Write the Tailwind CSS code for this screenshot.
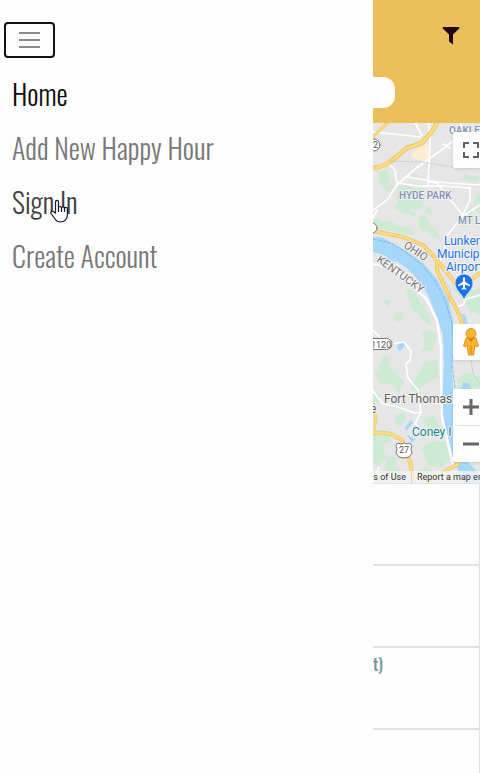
<!DOCTYPE html>
<html lang="en">
<head>
<meta charset="utf-8">
<meta name="viewport" content="width=device-width, initial-scale=1">
<title>Happy Hour</title>
<script src="https://cdn.jsdelivr.net/npm/@tailwindcss/browser@4"></script>
</head>
<body class="bg-[#fdfdfd]">
<div class="relative flex min-h-screen flex-col overflow-hidden font-['Oswald','Roboto_Condensed','Liberation_Sans_Narrow',sans-serif]">
  <header class="bg-[#ebc05b] pb-[15px]">
    <div class="flex h-[77px] justify-end pt-[27px] pr-5">
      <button aria-label="Filter" class="h-[18px] w-[18px]">
        <svg viewBox="0 0 18 18" class="block" fill="#200812"><path d="M.8 0h16.5v1.4L11 7.6v10L7 14.6v-7L.8 1.4z"/></svg>
      </button>
    </div>
    <div class="pr-[85px] pl-5"><input aria-label="Search" class="block h-[31px] w-full rounded-xl bg-[#fdfdfd] px-3 outline-none"></div>
  </header>

  <section aria-label="Map" class="flex h-[360px] justify-end bg-[#e6e6e6]">
    <div class="relative h-full w-2/9 overflow-hidden">
      <svg viewBox="0 0 107 360" preserveAspectRatio="xMinYMin slice" class="h-full w-full" font-family="Roboto, sans-serif" fill="none" stroke-linejoin="round" stroke-linecap="round">
        <rect width="107" height="361" fill="#e6e6e6"/>
        <g fill="#cdead2">
          <path d="M6 49l6-2 5 5v7l4 5-7 5-5-6-4-5zM24 65l10-3 8 4 7-1 4 5-6 7 4 5-4 5-8-1-4 6-7-3-6-3 3-9zM90 50l8 3h8v5l-8 1-8-4zM38 50l7 2-4 4zM102 74l5-3v20l-7-6zM52 83l6 1 1 8-7-2zM0 95l10 4 7-2 8 6 11 1 7 8-13-1L0 104zM45 92l8 1 3 8 9 8 3 9-12-8-10-5zM91 90l8-7 2 13-10 9-6-7zM34 87l9 2-2 6zM15 142l8 2-4 3zM33 165l9 4 5 9-6 6-7-10zM85 154l9 4 5 10 8-4v28l-9-4-10-12-8-10z"/>
          <path d="M10 177l8 1-4 6zM22 191l6-2 3 4-4 6-6-2zM38 179l10 1 7 10 4 12-6-2-6-8-9-6zM49 210l9-3 6 6-4 14-12 2 4-8zM9 231l9 4-2 9 8 9 7 5-5 13-7-10-10 1-7-11 6-10zM52 238l12-1 2 17-13 6-9 9-7-3 7-12zM0 269l8 3-3 8-5-3zM84 257l8-8 15 5v20H86zM0 307l9 5 6-2 3 8-8 3 3 14-8 9-5-7zM21 292l10-3 2 8-8 8zM51 297l9-5 8 14-12 3zM48 325l10-7 14 1 5 17-10 9-12-3zM14 332l11 3-3 9 6 3-4 9-12-6zM46 347l10-3 8 7-7 10H46zM0 350l12 4v7H0z"/>
        </g>
        <path fill="#fbeed2" d="M39 31l6-6 10-4 2 15-4 3-14-4z"/>
        <path fill="#a5d7fb" d="M0 114Q9 113 17 119L34 128 50 140 64 156 75 177 80 197 82 220 79 240 80 267 84 300 94 338 107 352V361H92L80 337 70 294 69 277 71 244 70 212 62 190 55 172 47 159 34 145 17 134 0 129z"/>
        <path stroke="#7fb0d6" stroke-width=".8" stroke-dasharray="3 2" d="M0 116L18 120 34 130 49 142 62 158 72 177 79 200 81 225 79 240 82 265"/>
        <g fill="#a5d7fb"><path d="M25 220l5-1 2 4-5 5-3-3zM88 190l4 2 4 12-4-1zM87 269l3-10 7 2 1 9zM31 306l7-9 2 3-6 7zM34 312l8 4-3 4zM8 129l8 3 8 8-7-3z"/></g>
        <g stroke="#fff" stroke-width="1.700">
          <path d="M0 9l30 3 17 2 2-2-7-12M56 0l1 20-2 42M24 62l18-16 25-18 12-9M24 62l-2-15-8-8M24 60l22 3 24 0 27 2M34 54l30 5 42 3M55 59l9 1 11 14 14 17M97 64v13l-8 17M0 87l14-10 10-15M70 21l7 4M0 95l4-8M88 0v10M89 94l-8 10-8 10-2 18-6 9M107 82l-8 5-10 7M107 172l-14 4-3 6-8 2"/>
          <path d="M0 141L16 144 27 151 40 162 54 177 64 197 68 224V249L69 294 80 341" stroke-width="2.400"/>
          <path d="M19 221l12-2 7 9-1 10-4 3 2 14 10 12 3 22-6 12M0 268l10 13 15 3 17 6 6-1M0 208l6 5M41 311l3-9M0 359l6-15M45 361l-5-12M96 232l11 4M96 361l-8-12"/>
        </g>
        <g stroke="#f0c35c" stroke-width="4.500">
          <path d="M0 45q10-1 17-6l17-14 15-5 11-13 4-7"/>
          <path d="M0 108L30 114 50 122 64 137V147L74 169 84 187 89 200 94 212M64 137L79 156 84 162 92 161 107 150" stroke-width="4"/>
          <path d="M0 310q13-1 20 2l9 5 8 22 4 22M52 360l17-10 16-9 4-6 18 2" stroke-width="4"/>
          <path d="M0 14L14 0M0 280l3 16-3 13" stroke-width="3"/>
        </g>
        <g stroke="#fadb83" stroke-width="2.800">
          <path d="M0 45q10-1 17-6l17-14 15-5 11-13 4-7M0 310q13-1 20 2l9 5 8 22 4 22M52 360l17-10 16-9 4-6 18 2"/>
          <path d="M0 14L14 0M0 280l3 16-3 13" stroke-width="2"/>
          <path d="M0 108L30 114 50 122 64 137V147L74 169 84 187 89 200 94 212M64 137L79 156 84 162 92 161 107 150" stroke-width="2.400"/>
        </g>
        <path stroke="#b9bdc7" stroke-width=".7" stroke-dasharray="2 2" d="M18 38l30 1 32 5M70 155l8 12-3 15M97 230l3 20 7 12"/>
        <g stroke="#777" stroke-width="1" fill="#fff">
          <circle cx="1" cy="22" r="6"/><circle cx="-1" cy="105" r="5"/>
          <rect x="-6" y="215.500" width="25" height="11" rx="5.500"/>
          <path d="M25 320l3 1 3-1 3 1 3-1 2 3-1 3 1 4-3 4-5 1-5-1-3-4 1-4-1-3z"/>
        </g>
        <g fill="#555" font-size="9">
          <text x="0" y="25">2</text><text x="-2" y="224.500">1120</text><text x="26" y="330">27</text>
        </g>
        <g fill="#8292b3" font-size="10" font-weight="500" stroke="#f1f1f1" stroke-width="2" paint-order="stroke">
          <text x="76" y="11">OAKLEY</text><text x="26" y="76">HYDE PARK</text><text x="85" y="101">MT LOOKOUT</text>
        </g>
        <g fill="#777" font-size="11" stroke="#f4f4f4" stroke-width="2" paint-order="stroke">
          <text transform="translate(30 124) rotate(34)">OHIO</text>
          <text transform="translate(3 138) rotate(36)">KENTUCKY</text>
        </g>
        <g fill="#1a73e8" font-size="12" stroke="#f5f5f5" stroke-width="2" paint-order="stroke">
          <text x="71" y="122">Lunken</text><text x="64" y="135">Municipal</text><text x="73" y="148">Airport</text>
        </g>
        <path fill="#1a73e8" stroke="#f5f5f5" stroke-width=".7" d="M91 177c-2-7-9-9-9-17a9 9 0 0118 0c0 8-7 10-9 17z"/>
        <path fill="#fff" d="M91 154q1 0 1 2v2.500l5 3.500v1.200l-5-1.500v3l1.500 1v1l-2.500-.7-2.500.7v-1l1.500-1v-3l-5 1.500V162l5-3.500V156q0-2 1-2z"/>
        <g font-size="12" stroke="#f2f2f2" stroke-width="2" paint-order="stroke">
          <text x="11" y="280" fill="#606060">Fort Thomas</text><text x="-3" y="290" fill="#606060">e</text><text x="39" y="313" fill="#14838f">Coney I</text>
        </g>
      </svg>

      <div class="absolute bottom-0 left-0 flex h-3 w-full gap-[5px] bg-[#f5f5f5]/75 font-['Roboto',sans-serif] text-[9px] leading-3 whitespace-nowrap text-[#333]">
        <a href="#">s of Use</a>
        <span class="h-3 w-px shrink-0 bg-[#d5d5d5]"></span>
        <a href="#">Report a map error</a>
      </div>

      <div class="absolute top-[9px] left-20 flex w-9 flex-col">
        <button aria-label="Toggle fullscreen" class="flex h-9 items-center justify-center rounded-xs bg-[#fdfdfd] shadow">
          <svg class="h-4 w-4" viewBox="0 0 16 16" fill="none" stroke="#606060" stroke-width="2"><path d="M1 6V1h5M10 1h5v5M15 10v5h-5M6 15H1v-5"/></svg>
        </button>
        <button aria-label="Street View" class="mt-[156px] flex h-9 items-center justify-center rounded-xs bg-[#fdfdfd] shadow">
          <svg class="h-7 w-4" viewBox="0 0 16 28"><path d="M3 10q5-3 10 0l2.500 8-2 1-1.500-2-1.500 10h-5L4 17l-1.500 2-2-1z" fill="#f9b52c" stroke="#c98418" stroke-width=".8"/><path d="M5 10h6l-3 4z" fill="#d9702c"/><path d="M8 17v9" stroke="#c98418" stroke-width=".8"/><circle cx="8" cy="5.500" r="5" fill="#f9b52c" stroke="#c98418" stroke-width=".8"/></svg>
        </button>
        <div class="mt-[29px] rounded-xs bg-[#fdfdfd] shadow">
          <button aria-label="Zoom in" class="flex h-9 w-full items-center justify-center"><svg class="h-4 w-4" viewBox="0 0 16 16" stroke="#666" stroke-width="3"><path d="M0 8h16M8 0v16"/></svg></button>
          <div class="mx-1 h-px bg-[#e2e2e2]"></div>
          <button aria-label="Zoom out" class="flex h-9 w-full items-center justify-center"><svg class="h-4 w-4" viewBox="0 0 16 16" stroke="#666" stroke-width="3"><path d="M0 8h16"/></svg></button>
        </div>
      </div>
    </div>
  </section>

  <ul class="flex-1 divide-y-2 divide-[#dee2e6] border-t border-r border-[#dee2e6] text-base leading-6 font-medium text-[#719b92]">
    <li class="h-[82px]"></li>
    <li class="h-[82px]"></li>
    <li class="flex h-[82px] justify-end pt-1 pr-24">t)</li>
    <li class="h-10"></li>
  </ul>

  <aside class="absolute inset-y-0 left-0 w-7/9 bg-[#fdfdfd] pt-[22px]">
    <button aria-label="Toggle navigation" class="ml-1 flex h-9 w-[51px] flex-col items-center justify-center gap-[5px] rounded-[4px] border-2 border-[#111]">
      <span class="h-0.5 w-[21px] bg-[#8a8a8a]"></span>
      <span class="h-0.5 w-[21px] bg-[#8a8a8a]"></span>
      <span class="h-0.5 w-[21px] bg-[#8a8a8a]"></span>
    </button>
    <nav class="mt-[9px] flex flex-col items-start pl-3 text-[28px] leading-[54px] font-light text-[#777]">
      <a href="#" class="text-[#0c0c0c]">Home</a>
      <a href="#">Add New Happy Hour</a>
      <a href="#" class="text-[#404040]">Sign In</a>
      <a href="#">Create Account</a>
    </nav>
  </aside>

  <svg class="pointer-events-none absolute top-[199px] left-[50px] h-6 w-[19px]" viewBox="0 0 19 24" fill="#fdfdfd" stroke="#17172b" stroke-width="1.200" stroke-linejoin="round"><path d="M5.500 14V3q0-1.600 1.500-1.600T8.500 3v6q0-1.500 1.500-1.500t1.500 1.500q0-1.200 1.500-1.200T14.500 9.500q0-1.200 1.400-1.200t1.500 1.700v6q0 3-2 5-1.500 2-5 2-3.500 0-5-2.500L1 14.500q-.6-1.500.7-2t2 .5z"/><path d="M8.500 9v4M11.500 9v4M14.500 9.500V13" fill="none"/></svg>
</div>
</body>
</html>
